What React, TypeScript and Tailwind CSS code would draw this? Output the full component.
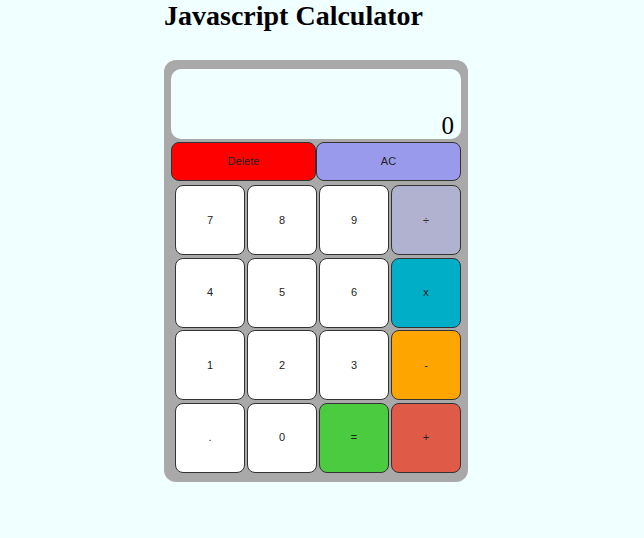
import React from "react";

const btnBase =
  "flex items-center justify-center border border-[#333] rounded-[8px] text-[11px] text-[#222] font-['Liberation_Sans',Arial,sans-serif]";

export default function App() {
  const keys: { label: string; cls: string }[] = [
    { label: "7", cls: "bg-white" },
    { label: "8", cls: "bg-white" },
    { label: "9", cls: "bg-white" },
    { label: "÷", cls: "bg-[#b1b1d0]" },
    { label: "4", cls: "bg-white" },
    { label: "5", cls: "bg-white" },
    { label: "6", cls: "bg-white" },
    { label: "x", cls: "bg-[#00aec7]" },
    { label: "1", cls: "bg-white" },
    { label: "2", cls: "bg-white" },
    { label: "3", cls: "bg-white" },
    { label: "-", cls: "bg-[#ffa500]" },
    { label: ".", cls: "bg-white" },
    { label: "0", cls: "bg-white" },
    { label: "=", cls: "bg-[#4acb40]" },
    { label: "+", cls: "bg-[#e05a48]" },
  ];
  return (
    <div className="w-[644px] h-[538px] bg-[#f0ffff] overflow-hidden">
      <h1 className="ml-[164px] m-0 text-[28px] leading-[32px] font-bold font-['Liberation_Serif','Times_New_Roman',serif] text-black">
        Javascript Calculator
      </h1>
      <div className="ml-[164px] mt-[28px] w-[304px] h-[422px] bg-[#a9a9a9] rounded-[12px] pt-[9px] px-[7px]">
        <div className="w-[290px] h-[70px] bg-[#f0ffff] rounded-[10px] flex items-end justify-end pr-[7px] pb-[1px]">
          <span className="text-[25px] leading-none font-['Liberation_Serif','Times_New_Roman',serif] text-black">
            0
          </span>
        </div>
        <div className="mt-[3px] flex w-[290px] h-[39px]">
          <div className={`${btnBase} w-[145px] h-full bg-[#ff0000]`}>Delete</div>
          <div className={`${btnBase} w-[145px] h-full bg-[#9a9aec]`}>AC</div>
        </div>
        <div className="mt-[4px] ml-[4px] grid grid-cols-[repeat(4,70px)] grid-rows-[repeat(4,70px)] gap-x-[2px] gap-y-[2.5px]">
          {keys.map((k) => (
            <div key={k.label} className={`${btnBase} ${k.cls}`}>
              {k.label}
            </div>
          ))}
        </div>
      </div>
    </div>
  );
}
